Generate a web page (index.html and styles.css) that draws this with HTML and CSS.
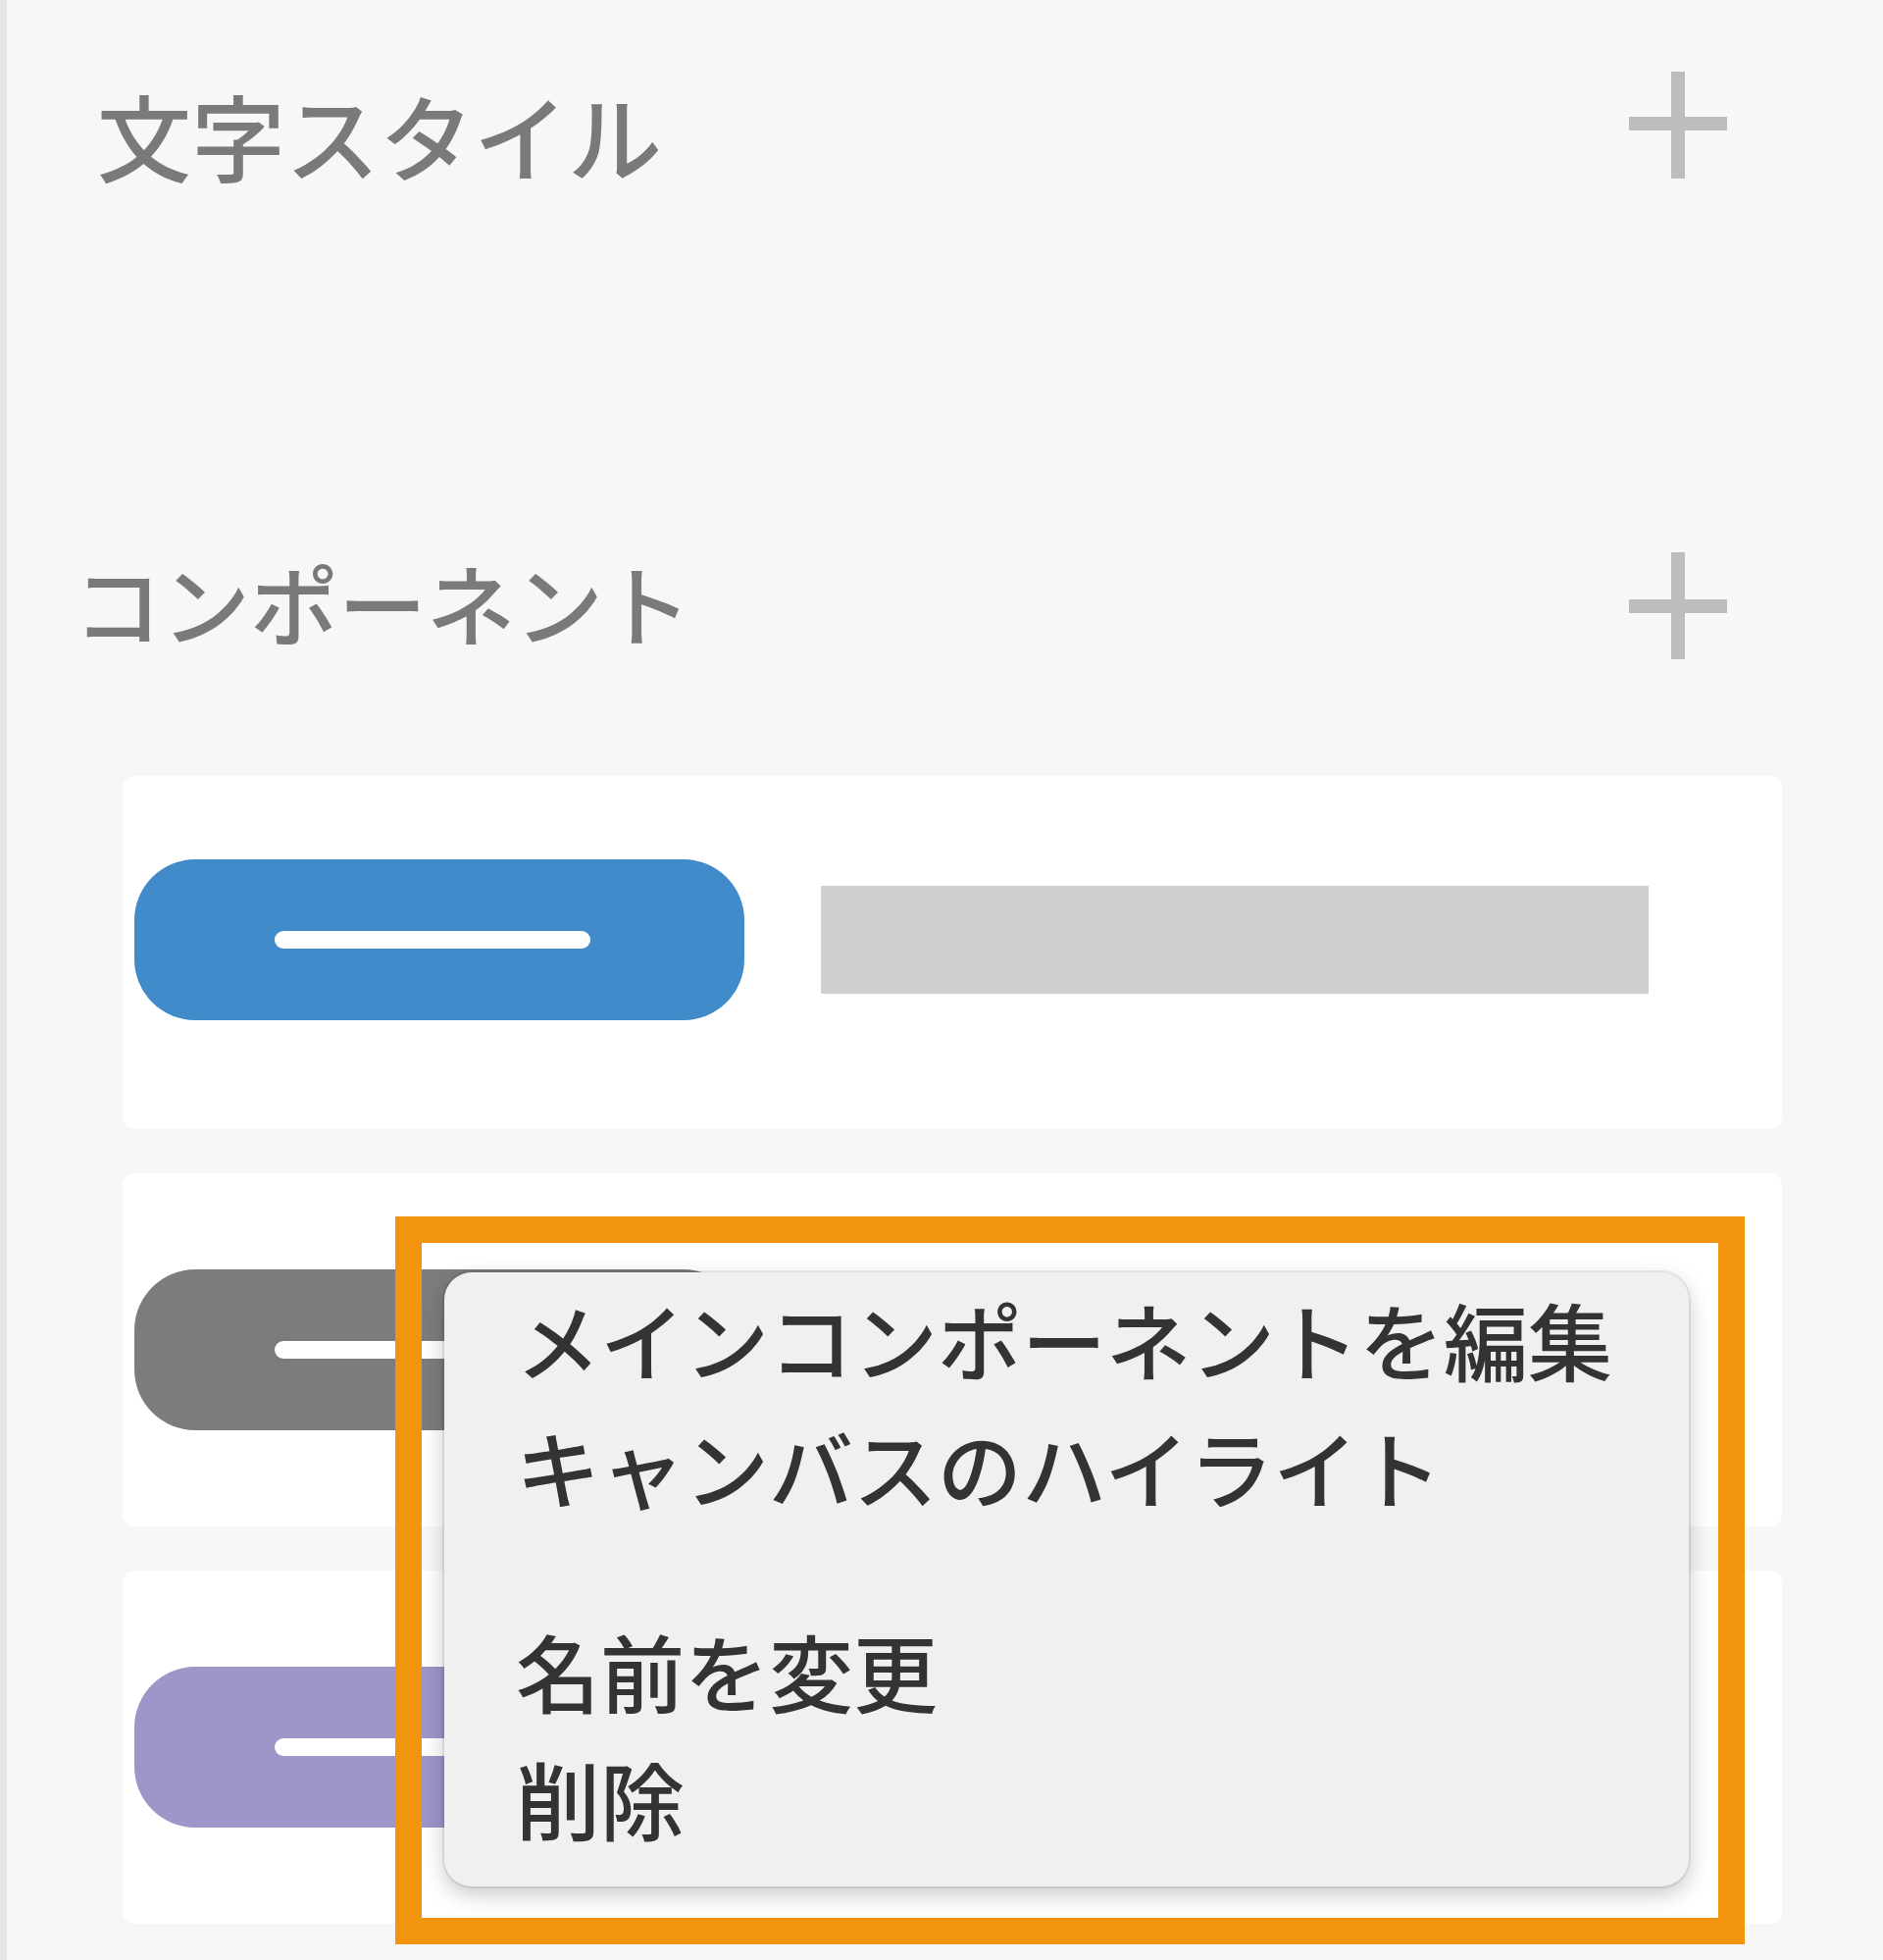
FILE: index.html
```html
<!DOCTYPE html>
<html lang="ja">
<head>
<meta charset="utf-8">
<title>コンポーネント</title>
<link rel="stylesheet" href="styles.css">
</head>
<body>
<div class="app">
  <div class="rail"></div>
  <main class="panel">
    <section class="section section--styles">
      <header class="section-head">
        <h2 class="section-title section-title--styles">文字スタイル</h2>
        <button class="add-btn" aria-label="追加">
          <svg width="100" height="109" viewBox="0 0 100 109"><path d="M0 53H100M50 0V109" stroke="#bdbdbd" stroke-width="14" fill="none"/></svg>
        </button>
      </header>
    </section>
    <section class="section section--components">
      <header class="section-head">
        <h2 class="section-title section-title--components">コンポーネント</h2>
        <button class="add-btn" aria-label="追加">
          <svg width="100" height="109" viewBox="0 0 100 109"><path d="M0 55H100M50 0V109" stroke="#bdbdbd" stroke-width="14" fill="none"/></svg>
        </button>
      </header>
      <ul class="component-list">
        <li class="card card--first">
          <div class="pill pill--blue"><span class="pill-line"></span></div>
          <div class="placeholder"></div>
        </li>
        <li class="card">
          <div class="pill pill--gray"><span class="pill-line"></span></div>
          <div class="placeholder"></div>
        </li>
        <li class="card">
          <div class="pill pill--purple"><span class="pill-line"></span></div>
          <div class="placeholder"></div>
        </li>
      </ul>
    </section>
  </main>
</div>

<div class="callout"></div>
<div class="context-menu" role="menu">
  <div class="menu-group">
    <div class="menu-item" role="menuitem">メインコンポーネントを編集</div>
    <div class="menu-item" role="menuitem">キャンバスのハイライト</div>
  </div>
  <div class="menu-sep"></div>
  <div class="menu-group menu-group--second">
    <div class="menu-item" role="menuitem">名前を変更</div>
    <div class="menu-item" role="menuitem">削除</div>
  </div>
</div>
</body>
</html>
```

FILE: styles.css
```css
* { box-sizing: border-box; }
html, body {
  margin: 0;
  padding: 0;
}
body {
  width: 1920px;
  height: 1998px;
  background: #f7f7f7;
  font-family: "Noto Sans CJK JP", "Noto Sans", sans-serif;
  overflow: hidden;
  position: relative;
}
.app {
  display: flex;
  height: 1998px;
}
.rail {
  width: 7px;
  flex: none;
  background: #e4e4e4;
}
.panel {
  flex: 1;
  padding: 73px 159px 0 0;
}
.section-head {
  display: flex;
  justify-content: space-between;
  align-items: flex-start;
}
.section-title {
  margin: 0;
  font-weight: 500;
  color: #7a7a7a;
  line-height: 1;
  white-space: nowrap;
}
.section-title--styles {
  font-size: 96px;
  margin-left: 92px;
  margin-top: 16px;
}
.section-title--components {
  font-size: 90px;
  margin-left: 68px;
  margin-top: 5px;
}
.add-btn {
  border: 0;
  padding: 0;
  background: none;
  width: 100px;
  height: 109px;
  display: block;
}
.add-btn svg { display: block; }
.section--components {
  margin-top: 378px;
}
.component-list {
  list-style: none;
  margin: 119px -56px 0 118px;
  padding: 0;
  display: flex;
  flex-direction: column;
  gap: 45px;
}
.card {
  height: 360px;
  background: #ffffff;
  border-radius: 12px;
  display: flex;
  align-items: flex-start;
  gap: 78px;
  padding: 98px 0 0 12px;
}
.card--first {
  padding-top: 85px;
}
.pill {
  width: 622px;
  height: 164px;
  border-radius: 62px;
  display: flex;
  align-items: center;
  justify-content: center;
  flex: none;
}
.pill--blue { background: #428bca; }
.pill--gray { background: #7b7c7b; }
.pill--purple { background: #9e95c8; }
.pill-line {
  width: 322px;
  height: 18px;
  border-radius: 9px;
  background: #ffffff;
  margin-left: -14px;
}
.placeholder {
  width: 844px;
  height: 110px;
  margin-top: 27px;
  background: #cfcfcd;
  flex: none;
}

/* highlight frame over the screenshot */
.callout {
  position: absolute;
  left: 403px;
  top: 1240px;
  width: 1376px;
  height: 742px;
  border: 27px solid #f3940f;
  z-index: 2;
}
.context-menu {
  position: absolute;
  left: 453px;
  top: 1297px;
  width: 1269px;
  height: 626px;
  background: #f0f0f0;
  border-radius: 28px;
  box-shadow: 0 0 0 2px rgba(0, 0, 0, 0.07), 0 8px 22px rgba(0, 0, 0, 0.22);
  padding: 3px 0 0 73px;
  z-index: 3;
}
.menu-item {
  font-size: 86px;
  font-weight: 500;
  line-height: 130px;
  height: 130px;
  color: #333333;
  white-space: nowrap;
}
.menu-sep {
  height: 78px;
}
```
